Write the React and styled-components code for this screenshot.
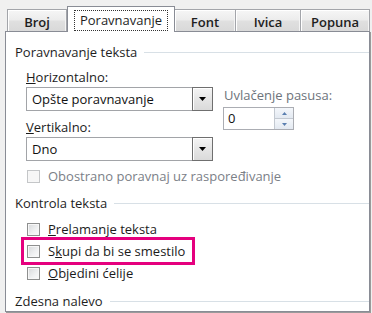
import React from 'react';
import styled, { createGlobalStyle } from 'styled-components';

const Global = createGlobalStyle`
  html, body { margin: 0; padding: 0; background: #f0f0f0; }
  body {
    font-family: "Open Sans", "Noto Sans", sans-serif;
    font-size: 13px;
    color: #1b1b1b;
  }
  * { box-sizing: border-box; }
`;

const Window = styled.div`
  width: 372px;
  height: 313px;
  background: #f0f0f0;
  overflow: hidden;
`;

const TabStrip = styled.div`
  display: flex;
  align-items: flex-end;
  height: 31px;
  padding-left: 7px;
  position: relative;
  z-index: 1;
  white-space: nowrap;
`;

const Tab = styled.div`
  flex: none;
  width: ${p => p.$w}px;
  height: 22px;
  border: 1px solid #a3a5aa;
  border-bottom: none;
  border-left-width: ${p => (p.$first ? 1 : 0)}px;
  padding-top: 3px;
  line-height: 18px;
  text-align: center;
  font-weight: 600;
  color: #1e1e1e;
  background: linear-gradient(#f6f6f6, #ececec 48%, #e0e0e0 52%, #d9d9d9);
  box-shadow: inset 1px 1px 0 #ffffff, inset -1px 0 0 #f4f4f4;
`;

const ActiveTab = styled.div`
  flex: none;
  width: ${p => p.$w}px;
  height: 26px;
  margin-bottom: -1px;
  border: 1px solid #898c95;
  border-bottom: none;
  background: #ffffff;
  display: flex;
  justify-content: center;
  padding-top: 3px;
  color: #1e1e1e;
`;

const FocusLabel = styled.span`
  width: 94px;
  height: 21px;
  border: 1px dotted #333;
  line-height: 19px;
  text-align: center;
`;

const Panel = styled.div`
  margin-left: 5px;
  width: 365px;
  height: 281px;
  background: #ffffff;
  border: 1px solid #898c95;
  box-shadow: 1px 1px 0 #9a9a9a;
  padding-top: 10px;
  overflow: hidden;
`;

const Header = styled.div`
  display: flex;
  align-items: center;
  height: 20px;
  margin-top: ${p => p.$top || 0}px;
  padding-left: 9px;
  color: #1e1e1e;
  white-space: nowrap;

  &::after {
    content: "";
    flex: 1;
    height: 1px;
    margin-left: 7px;
    background: #d8e0e6;
  }
`;

const Group = styled.div`
  padding-left: 18px;
`;

const Fields = styled.div`
  display: flex;
  padding-left: 2px;
`;

const LeftCol = styled.div`
  width: 187px;
  display: flex;
  flex-direction: column;
`;

const RightCol = styled.div`
  margin-left: 10px;
  padding-top: 23px;
  display: flex;
  flex-direction: column;
`;

const FieldLabel = styled.div`
  height: 20px;
  line-height: 20px;
  margin-top: ${p => p.$top || 0}px;
  padding-left: ${p => p.$indent || 0}px;
  color: ${p => (p.$disabled ? '#6d737b' : '#1b1b1b')};
  white-space: nowrap;
`;

const Select = styled.div`
  display: flex;
  height: 24px;
  border: 1px solid #a2a4a8;
  background: #fff;
`;

const SelectValue = styled.div`
  flex: 1;
  padding-left: 5px;
  line-height: 22px;
  color: #111;
`;

const DropButton = styled.div`
  width: 21px;
  margin: -1px -1px -1px 0;
  border: 1px solid #6f6f6f;
  background: linear-gradient(#f4f4f4, #e6e6e6 50%, #dadada);
  box-shadow: inset 1px 1px 0 #ffffff;
  display: flex;
  align-items: center;
  justify-content: center;
`;

const Spin = styled.div`
  margin-top: 2px;
  width: 71px;
  height: 23px;
  border: 1px solid #abadb3;
  display: flex;
  background: #fff;
`;

const SpinValue = styled.div`
  flex: 1;
  padding-left: 4px;
  line-height: 21px;
  color: #111;
`;

const SpinButtons = styled.div`
  width: 19px;
  display: flex;
  flex-direction: column;
  border-left: 1px solid #c3c9d1;
`;

const SpinButton = styled.div`
  flex: 1;
  display: flex;
  align-items: center;
  justify-content: center;
  background: linear-gradient(#f4f7fb, #e3e9f1);
  border-bottom: ${p => (p.$top ? '1px solid #c3c9d1' : 'none')};
`;

const CheckRow = styled.div`
  display: flex;
  align-items: center;
  gap: 8px;
  height: ${p => p.$h || 22}px;
  margin-top: ${p => p.$top || 0}px;
  padding-left: 3px;
  width: ${p => (p.$highlight ? '168px' : 'auto')};
  outline: ${p => (p.$highlight ? '3px solid #e5007e' : 'none')};
  color: ${p => (p.$disabled ? '#7b8087' : '#1b1b1b')};
  white-space: nowrap;
`;

const Box = styled.span`
  flex: none;
  width: 13px;
  height: 13px;
  border: 1px solid ${p => (p.$disabled ? '#c4c6c8' : '#8e8f8f')};
  background: ${p =>
    p.$disabled
      ? '#f6f6f6'
      : 'linear-gradient(135deg, #d6d8da, #f0f1f2 60%, #fbfbfb)'};
  box-shadow: inset 0 0 0 1px #f7f7f7;
`;

const Triangle = ({ up, color = '#000', w = 7, h = 4 }) => (
  <svg width={w} height={h} viewBox={`0 0 ${w} ${h}`}>
    <polygon
      points={up ? `0,${h} ${w / 2},0 ${w},${h}` : `0,0 ${w},0 ${w / 2},${h}`}
      fill={color}
    />
  </svg>
);

export default function App() {
  return (
    <Window>
      <Global />
      <TabStrip>
        <Tab $w={60} $first>Broj</Tab>
        <ActiveTab $w={108}>
          <FocusLabel>Poravnavanje</FocusLabel>
        </ActiveTab>
        <Tab $w={61}>Font</Tab>
        <Tab $w={65}>Ivica</Tab>
        <Tab $w={69}>Popuna</Tab>
      </TabStrip>
      <Panel>
        <Header>Poravnavanje teksta</Header>
        <Group>
          <Fields>
            <LeftCol>
              <FieldLabel $top={5}><u>H</u>orizontalno:</FieldLabel>
              <Select>
                <SelectValue>Opšte poravnavanje</SelectValue>
                <DropButton><Triangle /></DropButton>
              </Select>
              <FieldLabel $top={6}><u>V</u>ertikalno:</FieldLabel>
              <Select>
                <SelectValue>Dno</SelectValue>
                <DropButton><Triangle /></DropButton>
              </Select>
            </LeftCol>
            <RightCol>
              <FieldLabel $disabled $indent={1}>Uvlačenje pasusa:</FieldLabel>
              <Spin>
                <SpinValue>0</SpinValue>
                <SpinButtons>
                  <SpinButton $top><Triangle up color="#5a7fb0" w={5} h={3} /></SpinButton>
                  <SpinButton><Triangle color="#5a7fb0" w={5} h={3} /></SpinButton>
                </SpinButtons>
              </Spin>
            </RightCol>
          </Fields>
          <CheckRow $h={20} $top={5} $disabled>
            <Box $disabled />
            Obostrano poravnaj uz raspoređivanje
          </CheckRow>
        </Group>
        <Header $top={7}>Kontrola teksta</Header>
        <Group>
          <CheckRow $top={5}>
            <Box />
            <span><u>P</u>relamanje teksta</span>
          </CheckRow>
          <CheckRow $highlight>
            <Box />
            <span>S<u>k</u>upi da bi se smestilo</span>
          </CheckRow>
          <CheckRow>
            <Box />
            <span><u>O</u>bjedini ćelije</span>
          </CheckRow>
        </Group>
        <Header $top={7}>Zdesna nalevo</Header>
      </Panel>
    </Window>
  );
}
